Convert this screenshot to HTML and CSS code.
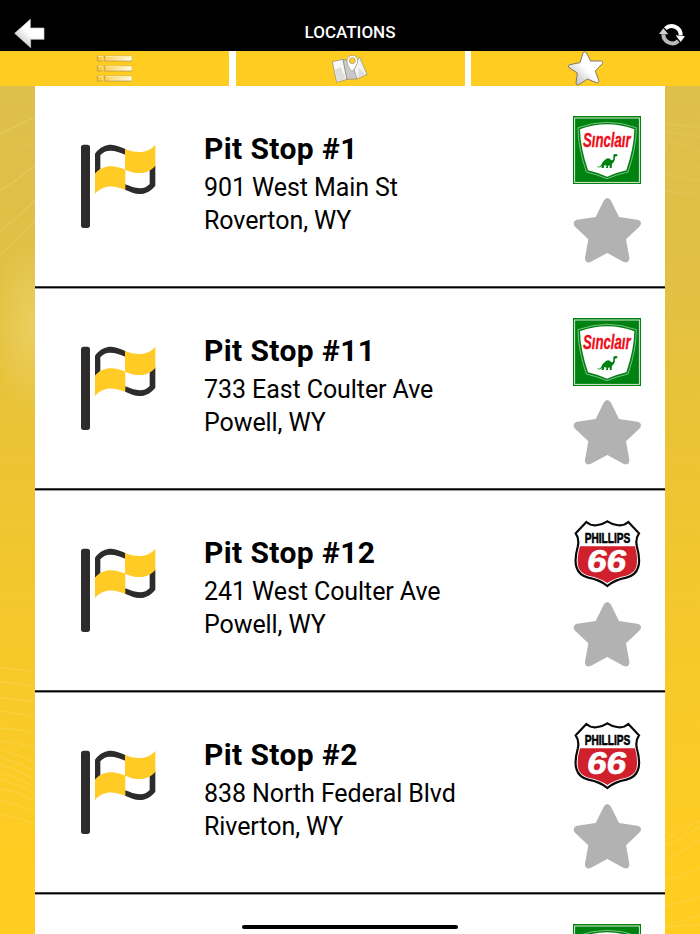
FILE: index.html
```html
<!DOCTYPE html>
<html lang="en">

<head>
    <meta charset="UTF-8">
    <title>Locations</title>
    <link rel="stylesheet" href="styles.css">
</head>

<body>

    <!-- shared icons -->
    <svg class="defs" width="0" height="0">
        <defs>
            <linearGradient id="silver" x1="1" y1="0" x2="0" y2="1">
                <stop offset="0.5" stop-color="#fff" />
                <stop offset="1" stop-color="#aaa" />
            </linearGradient>
            <linearGradient id="gold" x1="0" y1="0" x2="1" y2="0.2">
                <stop offset="0" stop-color="#ffbd17" />
                <stop offset="1" stop-color="#fff8dc" />
            </linearGradient>
        </defs>

        <symbol id="flag" viewBox="60 39 231 261">
            <rect x="63" y="44" width="27" height="250" rx="8" fill="#2d2b2c" />
            <path fill="#2d2b2c" d="M105 131V71C120 50 138 44 153 44C168 44 181 51 196 57V74C180 68 167 62 150 62C139 62 130 66 121 76V117Z" />
            <path fill="#2d2b2c" d="M286 106V167C270 186 255 192 239 192C224 192 211 185 195 179V163C211 168 224 175 240 175C253 175 261 170 269 162V121Z" />
            <path fill="#ffcb24" d="M195 57C224 68 259 75 286 44V107C259 138 224 131 195 119Z" />
            <path fill="#ffcb24" d="M105 131C132 100 166 107 196 119V179C165 168 132 160 105 192Z" />
        </symbol>

        <symbol id="star" viewBox="39 21 204 198">
            <path fill="#b2b2b2" d="M131 32Q136 24 142 24Q148 24 153 32L177 81L232 89Q243 91 243 101Q242 106 237 111L198 148L208 203Q209 213 201 217Q196 218 190 215L142 189L93 215Q87 218 82 217Q74 213 75 203L85 148L46 111Q41 106 41 101Q42 91 51 89L107 81Z" />
        </symbol>

        <g id="sinclair">
            <rect x="39" y="33" width="204" height="204" fill="#008211" />
            <rect x="44" y="39" width="194" height="193" fill="none" stroke="#fff" stroke-width="2.5" />
            <path d="M54 68Q98 52 141 52Q185 52 229 68Q229 128 204 201Q172 208 141 221Q110 208 79 201Q54 128 54 68Z" fill="#008211" stroke="#b9dfbf" stroke-width="2" />
            <path d="M60 73Q100 58 141 58Q182 58 223 73Q222 128 199 196Q169 203 141 215Q114 203 84 196Q61 128 60 73Z" fill="#fff" />
            <path fill="#008211" d="M108 177L112 183Q119 188 123 181Q127 170 137 163Q145 157 151 163Q157 169 160 161L160 151Q162 145 172 148L172 153L165 155Q166 169 156 176L155 189H149L149 181L144 183V189H138L140 182L133 180L131 189H124L126 182Q121 189 114 187Z" />
        </g>

        <g id="phillips">
            <path fill="#fff" stroke="#080808" stroke-width="6.5" stroke-linejoin="miter" d="M79 36Q94 49 113 45Q130 42 142 34Q154 42 171 45Q190 49 205 36L237 70Q225 87 231 111Q242 151 234 173Q227 196 199 203Q163 210 142 228Q121 210 85 203Q57 196 50 173Q42 151 53 111Q59 87 47 70Z" />
            <path fill="#cf202b" d="M60 109H225Q235 145 229 171Q223 190 198 197Q163 204 142 219Q121 204 86 197Q61 190 55 171Q49 145 60 109Z" />
        </g>
    </svg>

    <div class="app">
        <header class="topbar">
            <svg class="back" width="32" height="32" viewBox="42 54 96 96">
                <path fill="url(#silver)" stroke="#ccc" stroke-width="2" stroke-linejoin="round" d="M44 100L91 58V84H132V118H92V143Z" />
            </svg>
            <h1 class="topbar-title">LOCATIONS</h1>
            <svg class="refresh" width="26" height="26" viewBox="598 66 78 78">
                <path fill="none" stroke="#fff" stroke-width="12" d="M617 86A27 27 0 0 1 663 106" />
                <path fill="none" stroke="#b9b9bd" stroke-width="12" d="M656 123A27 27 0 0 1 611 103" />
                <path fill="#fff" d="M648 106L676 109L663 126Z" />
                <path fill="#d2d2d5" d="M598 102L611 85L626 103Z" />
            </svg>
        </header>

        <nav class="tabs">
            <a class="tab tab-list">
                <svg width="37" height="30" viewBox="288 162 111 90">
                    <g fill="url(#gold)" stroke="#a98e4d" stroke-width="2">
                        <path d="M292 168h15v15h-15zM314 168h81v15h-81z" />
                        <path d="M292 198h15v15h-15zM314 198h81v15h-81z" />
                        <path d="M292 228h15v15h-15zM314 228h81v15h-81z" />
                    </g>
                    <path fill="none" stroke="#fff1b9" stroke-width="3" d="M294 169h13v12M317 169h77v12M294 199h13v12M317 199h77v12M294 229h13v12M317 229h77v12" />
                </svg>
            </a>
            <a class="tab tab-map">
                <svg width="38" height="30" viewBox="303 162 114 90">
                    <g stroke="#8b8779" stroke-width="2" stroke-linejoin="round">
                        <path fill="#f8f8f8" d="M307 185L339 178L351 238L320 247Z" />
                        <path fill="#c9c9c9" d="M339 178L357 182L383 180L381 237L351 238Z" />
                        <path fill="#f3f3f3" d="M383 180L389 172L411 223L381 237L372 210Z" />
                    </g>
                    <path fill="#ddd" d="M315 209L332 201L347 237L322 244ZM387 204L405 222L384 232Z" />
                    <path fill="#fff" stroke="#96938b" stroke-width="2" d="M366 215Q350 195 351 182A16 16 0 0 1 383 182Q383 195 366 215Z" />
                    <circle cx="367" cy="182" r="9" fill="#ffcb24" stroke="#96938b" stroke-width="2" />
                </svg>
            </a>
            <a class="tab tab-star">
                <svg width="38" height="35" viewBox="320 153 114 105">
                    <path fill="url(#silver)" stroke="#83796a" stroke-width="3" stroke-linejoin="round" d="M368 158Q373 153 378 158L391 183L424 183Q431 186 426 191L405 213L416 244Q415 250 408 248L381 237L354 255Q347 256 347 249L351 219L325 202Q321 196 328 194L359 188Z" />
                </svg>
            </a>
        </nav>

        <main class="content">
            <!-- faint swooshes on the backdrop -->
            <svg class="swoosh" width="700" height="848" viewBox="0 86 700 848">
                <g fill="none" stroke="#fff" stroke-opacity="0.15">
                    <path d="M0 134Q17 126 35 117M0 191Q18 180 35 165M0 232Q17 218 35 200M0 255Q18 238 35 220" stroke-opacity="0.2" />
                    <path d="M0 155Q18 147 35 143M0 210Q17 195 35 182M0 262Q18 244 35 228" stroke-opacity="0.08" />
                    <path d="M0 668Q18 669 35 672M0 682Q18 683 35 687M0 698Q18 699 35 702M0 711Q18 713 35 717M0 728Q18 729 35 733M0 741Q18 743 35 747" />
                    <path d="M0 750Q18 754 35 763M0 757Q18 762 35 772M0 764Q18 770 35 780M0 772Q18 777 35 787M0 779Q18 784 35 794M0 788Q18 792 35 801M0 800Q18 804 35 812M0 814Q18 817 35 824" />
                    <path d="M665 124Q683 125 700 128M665 132Q683 134 700 137M665 138Q683 145 700 152M665 150Q683 160 700 168M665 174Q683 178 700 181M665 191Q683 193 700 195" stroke-opacity="0.1" />
                    <path d="M665 839Q683 829 700 821M665 846Q683 838 700 827M665 862Q683 850 700 840M665 881Q683 876 700 868M665 906Q683 902 700 897M665 927Q683 920 700 915M665 927Q683 926 700 925" />
                </g>
            </svg>

            <ul class="list">
                <li class="row">
                    <svg class="flag"><use href="#flag" /></svg>
                    <div class="info">
                        <h2 class="name">Pit Stop #1</h2>
                        <p class="address">901 West Main St<br>Roverton, WY</p>
                    </div>
                    <div class="side">
                        <svg class="brand" viewBox="39 33 204 204">
                            <use href="#sinclair" />
                            <text class="sinclair-text" transform="translate(69 127) scale(0.66 1)">Sınclaır</text>
                        </svg>
                        <svg class="fav"><use href="#star" /></svg>
                    </div>
                </li>
                <li class="row">
                    <svg class="flag"><use href="#flag" /></svg>
                    <div class="info">
                        <h2 class="name">Pit Stop #11</h2>
                        <p class="address">733 East Coulter Ave<br>Powell, WY</p>
                    </div>
                    <div class="side">
                        <svg class="brand" viewBox="39 33 204 204">
                            <use href="#sinclair" />
                            <text class="sinclair-text" transform="translate(69 127) scale(0.66 1)">Sınclaır</text>
                        </svg>
                        <svg class="fav"><use href="#star" /></svg>
                    </div>
                </li>
                <li class="row">
                    <svg class="flag"><use href="#flag" /></svg>
                    <div class="info">
                        <h2 class="name">Pit Stop #12</h2>
                        <p class="address">241 West Coulter Ave<br>Powell, WY</p>
                    </div>
                    <div class="side">
                        <svg class="brand" viewBox="39 30 204 204">
                            <use href="#phillips" />
                            <text class="phillips-text" transform="translate(74 99) scale(0.66 1)">PHILLIPS</text>
                            <text class="phillips-num" x="81" y="185" textLength="117" lengthAdjust="spacingAndGlyphs">66</text>
                        </svg>
                        <svg class="fav"><use href="#star" /></svg>
                    </div>
                </li>
                <li class="row">
                    <svg class="flag"><use href="#flag" /></svg>
                    <div class="info">
                        <h2 class="name">Pit Stop #2</h2>
                        <p class="address">838 North Federal Blvd<br>Riverton, WY</p>
                    </div>
                    <div class="side">
                        <svg class="brand" viewBox="39 30 204 204">
                            <use href="#phillips" />
                            <text class="phillips-text" transform="translate(74 99) scale(0.66 1)">PHILLIPS</text>
                            <text class="phillips-num" x="81" y="185" textLength="117" lengthAdjust="spacingAndGlyphs">66</text>
                        </svg>
                        <svg class="fav"><use href="#star" /></svg>
                    </div>
                </li>
                <li class="row">
                    <div class="side">
                        <svg class="brand" viewBox="39 33 204 204"><use href="#sinclair" /></svg>
                    </div>
                </li>
            </ul>
        </main>

        <div class="home-bar"></div>
    </div>

</body>

</html>
```

FILE: styles.css
```css
* {
    box-sizing: border-box;
}

body {
    margin: 0;
    font-family: Roboto, "Liberation Sans", sans-serif;
    color: #000;
}

h1, h2, p, ul {
    margin: 0;
    padding: 0;
}

svg {
    display: block;
    flex: none;
}

.defs {
    position: absolute;
}

.app {
    position: relative;
    display: flex;
    flex-direction: column;
    width: 700px;
    height: 934px;
    overflow: hidden;
    background: #fff;
}

.topbar {
    display: flex;
    flex: none;
    justify-content: space-between;
    height: 51px;
    padding: 18px 15px 0 14px;
    background: #000;
}

.refresh {
    margin-top: 4px;
}

.topbar-title {
    margin-left: -5px;
    padding-top: 4px;
    color: #fff;
    font-size: 17px;
    font-weight: 500;
    line-height: 21px;
}

.tabs {
    display: grid;
    flex: none;
    grid-template-columns: 229px 229px 229px;
    gap: 6.5px;
    height: 35px;
    overflow: hidden;
}

.tab {
    display: flex;
    justify-content: center;
    align-items: center;
    background: #ffcd22;
}

.content {
    position: relative;
    flex: 1;
    min-height: 0;
    padding: 0 35px;
    overflow: hidden;
    background:
        radial-gradient(ellipse 50px 90px at 38px 240px, rgba(240, 216, 120, 0.6), transparent),
        linear-gradient(#debf4b, #e1c044 22%, #eac336 40%, #f4c82c 62%, #fccb25 84%, #ffcc20 92%);
}

.swoosh {
    position: absolute;
    top: 0;
    left: 0;
}

.list {
    position: relative;
    list-style: none;
    background: #fff;
}

.row {
    display: flex;
    align-items: flex-start;
    height: 202px;
    padding: 30px 24px 0 45px;
    border-bottom: 1px solid #000;
    box-shadow: inset 0 -1px #444, 0 1px #999;
}

.flag {
    width: 77px;
    height: 87px;
    margin-top: 27px;
}

.info {
    margin: 15px 0 0 47px;
}

.name {
    font-size: 30px;
    font-weight: 700;
    line-height: 36px;
    letter-spacing: 0.4px;
}

.address {
    margin-top: 4px;
    font-size: 25px;
    line-height: 33px;
    letter-spacing: -0.08px;
}

.side {
    display: flex;
    flex-direction: column;
    gap: 13px;
    margin-left: auto;
}

.brand {
    width: 68px;
    height: 68px;
}

.fav {
    width: 68px;
    height: 66px;
}

.sinclair-text {
    fill: #f00c18;
    stroke: #f00c18;
    stroke-width: 1px;
    font-family: "Liberation Sans", sans-serif;
    font-size: 60px;
    font-style: italic;
    font-weight: 700;
}

.phillips-text {
    stroke: #000;
    stroke-width: 2px;
    font-family: "Liberation Sans", sans-serif;
    font-size: 46px;
    font-weight: 700;
}

.phillips-num {
    fill: #fff;
    stroke: #fff;
    stroke-width: 2px;
    font-family: "Liberation Sans", sans-serif;
    font-size: 93px;
    font-style: italic;
    font-weight: 700;
}

.home-bar {
    position: absolute;
    bottom: 5px;
    left: 242px;
    width: 216px;
    height: 4px;
    border-radius: 2px;
    background: #000;
}
```
